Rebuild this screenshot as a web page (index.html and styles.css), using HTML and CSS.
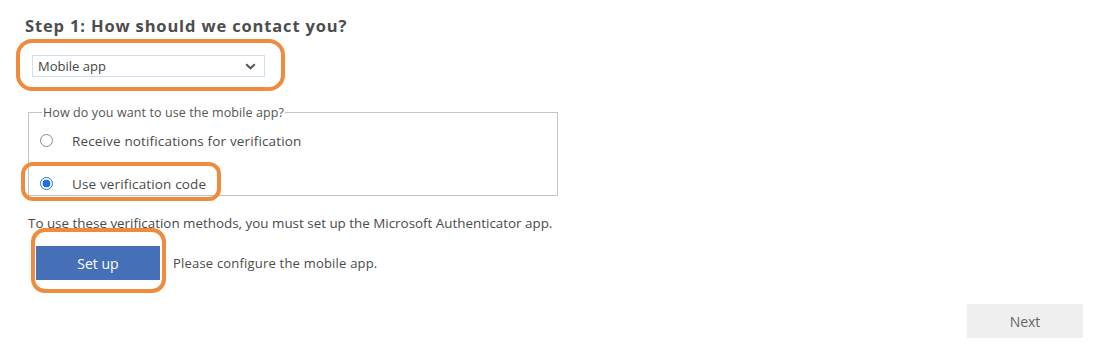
FILE: index.html
```html
<!DOCTYPE html>
<html lang="en">
<head>
  <meta charset="UTF-8">
  <title>Additional security verification</title>
  <link rel="stylesheet" href="styles.css">
</head>
<body>
  <div class="page">
    <h1 class="step-title">Step 1: How should we contact you?</h1>
    <div class="method">
      <div class="select">
        <span>Mobile app</span>
        <svg class="chevron" width="11" height="7" viewBox="0 0 11 7"><path d="M1.2 1.3l4.3 4 4.3-4" fill="none" stroke="#555" stroke-width="2"/></svg>
      </div>
    </div>
    <fieldset class="app-use">
      <legend>How do you want to use the mobile app?</legend>
      <label class="option"><span class="radio"></span>Receive notifications for verification</label>
      <label class="option"><span class="radio checked"></span>Use verification code</label>
    </fieldset>
    <p class="hint">To use these verification methods, you must set up the Microsoft Authenticator app.</p>
    <div class="setup-row">
      <button class="btn-primary">Set up</button>
      <span class="setup-note">Please configure the mobile app.</span>
    </div>
    <div class="footer">
      <button class="btn-next">Next</button>
    </div>

    <span class="mark mark-select"></span>
    <span class="mark mark-code"></span>
    <span class="mark mark-setup"></span>
  </div>
</body>
</html>
```

FILE: styles.css
```css
body{
  margin: 0;
  background: #fff;
  font-family: "Open Sans", "Noto Sans", sans-serif;
  color: #444;
}
.page{
  position: relative;
  width: 1102px;
  height: 357px;
  padding: 0 0 0 28px;
  box-sizing: border-box;
}
.step-title{
  margin: 0;
  padding-top: 15px;
  margin-left: -3px;
  font-size: 16.5px;
  line-height: 22px;
  font-weight: 700;
  color: #4d4d4d;
  letter-spacing: 0.85px;
}
.method{
  padding: 18px 0 0 4px;
}
.select{
  display: flex;
  align-items: center;
  justify-content: space-between;
  width: 233px;
  height: 22px;
  box-sizing: border-box;
  padding: 0 8px 0 5px;
  border: 1px solid #cfdff0;
  font-size: 13px;
  color: #444;
}
.app-use{
  width: 530px;
  height: 92px;
  box-sizing: border-box;
  margin: 27px 0 0;
  padding: 9px 0 0 12px;
  border: 1px solid #c4c4c4;
}
.app-use legend{
  padding: 0 1px;
  margin-left: 1px;
  font-size: 12.5px;
  letter-spacing: 0.1px;
  color: #555;
}
.option{
  display: flex;
  align-items: center;
  height: 21px;
  margin-bottom: 22px;
  font-size: 13.5px;
  letter-spacing: 0.15px;
  color: #4a4a4a;
}
.radio{
  width: 13px;
  height: 13px;
  margin: 0 19px 0 -1px;
  border: 1.5px solid #8c8c8c;
  border-radius: 50%;
  box-sizing: border-box;
}
.radio.checked{
  border: 1.5px solid #1f6fe8;
  background: radial-gradient(circle, #1f6fe8 0 3.6px, #fff 4.2px);
}
.hint{
  margin: 18px 0 0;
  font-size: 13.4px;
  line-height: 18px;
  color: #4a4a4a;
}
.setup-row{
  display: flex;
  align-items: center;
  gap: 13px;
  margin: 14px 0 0 8px;
}
.btn-primary{
  width: 124px;
  height: 34px;
  border: 0;
  background: #4570b8;
  color: #fff;
  font: 14px "Open Sans", sans-serif;
}
.setup-note{
  font-size: 13px;
  letter-spacing: 0.2px;
  color: #4a4a4a;
}
.footer{
  display: flex;
  justify-content: flex-end;
  padding: 24px 19px 0 0;
}
.btn-next{
  width: 116px;
  height: 34px;
  border: 0;
  background: #efefef;
  color: #666;
  font: 14px "Open Sans", sans-serif;
}

/* orange annotation marks */
.mark{
  position: absolute;
  border: 4px solid #f08a3c;
  border-radius: 16px;
  box-sizing: border-box;
}
.mark-select{ left: 16px; top: 39px; width: 269px; height: 52px; }
.mark-code{ left: 21px; top: 162px; width: 200px; height: 39px; border-radius: 12px; }
.mark-setup{ left: 31px; top: 228px; width: 135px; height: 65px; border-radius: 14px; }
```
